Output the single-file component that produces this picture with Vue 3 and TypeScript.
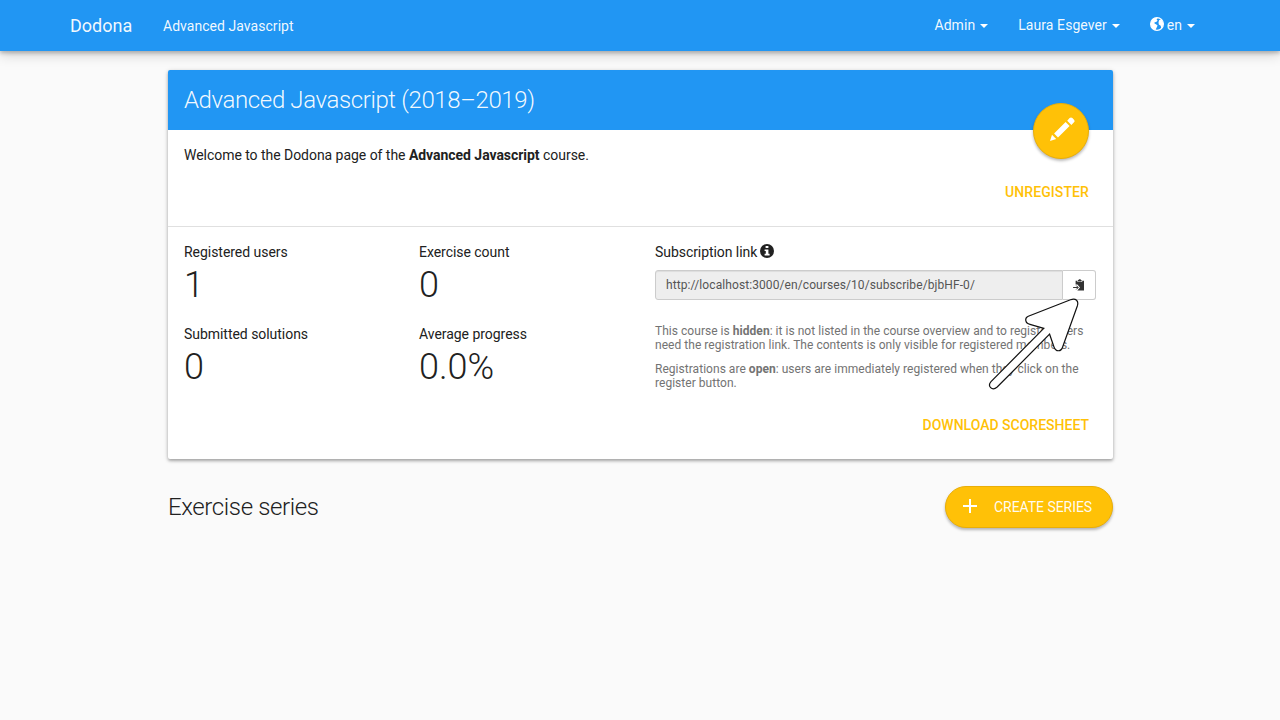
<script setup lang="ts">
interface Stat {
  label: string
  value: string
}

const stats: Stat[] = [
  { label: 'Registered users', value: '1' },
  { label: 'Exercise count', value: '0' },
  { label: 'Submitted solutions', value: '0' },
  { label: 'Average progress', value: '0.0%' },
]

const subscriptionLink = 'http://localhost:3000/en/courses/10/subscribe/bjbHF-0/'
</script>

<template>
  <div class="page">
    <nav class="navbar">
      <a class="brand">Dodona</a>
      <a class="crumb">Advanced Javascript</a>
      <div class="nav-right">
        <a class="nav-item">Admin<span class="caret"></span></a>
        <a class="nav-item">Laura Esgever<span class="caret"></span></a>
        <a class="nav-item lang">
          <svg class="globe" viewBox="0 0 14 14">
            <circle cx="7" cy="7" r="6.4" fill="none" stroke="#fff" stroke-width="1.2" />
            <path d="M1.2 4.5 3 1.8 6.5.6 7.7 1.5 6.5 2.5 7.6 3.6 6.2 5.1 4.6 5.3 4.5 6.6 6 7.3 7.6 8.6 6.9 10 5.4 13.2 2 11.5.6 7z M9.2 3.1 11.5 2.5 13.3 6 12.8 9.3 11.3 11.5 10.7 8.8 8.8 7.6 8.5 5.2z" fill="#fff" />
          </svg>
          en<span class="caret"></span>
        </a>
      </div>
    </nav>

    <main class="container">
      <section class="card">
        <header class="card-title">
          <h2>Advanced Javascript (2018–2019)</h2>
          <button class="fab" aria-label="Edit course">
            <svg viewBox="0 0 24 24" fill="#fff">
              <path d="M0 24 2 17.8 6.2 22z M4.1 16.5 15.6 5.1 19.6 9.1 8 20.5z M17.2 3.7 19.6 1.1Q21 -.2 22.4 1.1L24.2 2.9Q25.3 4 24 5.3L21.4 7.9z" />
            </svg>
          </button>
        </header>
        <div class="welcome">
          <p>Welcome to the Dodona page of the <b>Advanced Javascript</b> course.</p>
          <a class="action">UNREGISTER</a>
        </div>
        <div class="details">
          <div class="stats">
            <div v-for="stat in stats" :key="stat.label" class="stat">
              <div>{{ stat.label }}</div>
              <div class="value">{{ stat.value }}</div>
            </div>
          </div>
          <div class="subscription">
            <div class="label">
              Subscription link
              <svg class="info" viewBox="0 0 14 14">
                <circle cx="7" cy="7" r="7" fill="#212121" />
                <path d="M5.6 2h2.8v2.1H5.6z M4.6 5.4h3.8v4.3h1.2v1.7H4.6V9.7h1.2V7.1H4.6z" fill="#fff" />
              </svg>
            </div>
            <div class="input-group">
              <span class="link">{{ subscriptionLink }}</span>
              <button class="copy" aria-label="Copy link">
                <svg viewBox="0 0 12 12">
                  <path d="M2.6 1.7h1.8V3h4.8V1.7h1.8v9.7H4.3L7 8.5 4.4 5.4H2.6z M4.9 2.4V1h.9V.2h1.9V1h.9v1.4z" fill="#333" />
                  <path d="M.1 8.5h4.8 M3.3 6.6 5.2 8.5 3.3 10.4" fill="none" stroke="#333" stroke-width="1" />
                </svg>
              </button>
            </div>
            <p class="help">This course is <b>hidden</b>: it is not listed in the course overview and to register users need the registration link. The contents is only visible for registered members.</p>
            <p class="help">Registrations are <b>open</b>: users are immediately registered when they click on the register button.</p>
          </div>
        </div>
        <div class="card-actions"><a class="action">DOWNLOAD SCORESHEET</a></div>
      </section>

      <div class="series-header">
        <h2>Exercise series</h2>
        <button class="create">
          <svg viewBox="0 0 14 14"><path d="M7 0v14M0 7h14" stroke="#fff" stroke-width="2" /></svg>
          CREATE SERIES
        </button>
      </div>
    </main>

    <svg class="pointer" viewBox="0 0 96 96">
      <path d="M44.3 22.2 86.5 5.7C92 3.8 94.8 7 93.4 11.7L78.8 52.5C77.2 58.2 71.8 58 70 53L65.6 40.2 13.2 93C7.8 97.5 3.2 91.8 7 87.6L59.8 34.3 46 30.3C40.8 29.4 40.5 23.6 44.3 22.2Z" />
    </svg>
  </div>
</template>

<style>
html,
body {
  margin: 0;
  background: #fafafa;
}
</style>

<style scoped>
* {
  box-sizing: border-box;
}
.page {
  position: relative;
  height: 720px;
  overflow: hidden;
  background: #fafafa;
  color: #212121;
  font: 14px/20px Roboto, sans-serif;
}
button {
  border: 0;
  padding: 0;
  font: inherit;
}
h2 {
  margin: 0;
  font-size: 24px;
  font-weight: 300;
  line-height: 28px;
  letter-spacing: -0.38px;
}
p {
  margin: 0;
}
.navbar {
  display: flex;
  align-items: center;
  height: 51px;
  padding: 0 85px 0 70px;
  background: #2196f3;
  color: rgba(255, 255, 255, 0.95);
  box-shadow: 0 2px 4px rgba(0, 0, 0, 0.24), 0 4px 12px rgba(0, 0, 0, 0.16);
}
.brand {
  width: 93px;
  font-size: 18px;
}
.crumb {
  padding-top: 1px;
  letter-spacing: 0.04px;
}
.nav-right {
  display: flex;
  gap: 30px;
  margin-left: auto;
  padding-bottom: 1px;
}
.nav-item {
  display: flex;
  align-items: center;
}
.nav-item:not(.lang) {
  letter-spacing: 0.07px;
}
.caret {
  margin: 2px 0 0 5px;
  border: 4px solid transparent;
  border-top-color: #fff;
  border-bottom: 0;
}
.globe {
  width: 14px;
  height: 14px;
  margin: 0 3px 2px 0;
}
.container {
  width: 945px;
  margin: 19px auto 0 168px;
}
.card {
  height: 389px;
  border-radius: 2px;
  background: #fff;
  box-shadow: 0 2px 3px rgba(0, 0, 0, 0.25), 0 1px 5px rgba(0, 0, 0, 0.17);
}
.card-title {
  position: relative;
  height: 60px;
  padding: 16px;
  border-radius: 2px 2px 0 0;
  background: #2196f3;
  color: rgba(255, 255, 255, 0.95);
}
.fab {
  position: absolute;
  top: 33px;
  right: 24px;
  width: 56px;
  height: 56px;
  border: 1px solid #e9ae08;
  border-radius: 50%;
  background: #ffc107;
  box-shadow: 0 2px 3px rgba(0, 0, 0, 0.28);
}
.fab svg {
  display: block;
  width: 24px;
  height: 24px;
  margin: 0 0 5px 16px;
  overflow: visible;
}
.welcome {
  height: 97px;
  padding: 15px 24px 0 16px;
  border-bottom: 1px solid #e0e0e0;
}
.welcome p {
  letter-spacing: -0.04px;
}
.action {
  display: block;
  color: #ffc107;
  font-weight: 500;
  text-align: right;
}
.welcome .action {
  margin-top: 17px;
  letter-spacing: 0.1px;
}
.details {
  display: flex;
  height: 183px;
  padding: 15px 17px 0 16px;
}
.stats {
  display: grid;
  grid-template-columns: 235px 236px;
  grid-template-rows: 82px 82px;
  letter-spacing: -0.04px;
}
.value {
  font-size: 36px;
  font-weight: 300;
  line-height: 40px;
  padding-top: 3px;
}
.subscription {
  width: 441px;
}
.label {
  display: flex;
  gap: 3px;
  letter-spacing: -0.06px;
}
.info {
  width: 14px;
  height: 14px;
  margin-top: 2px;
}
.input-group {
  display: flex;
  height: 30px;
  margin: 8px 0 24px;
  font-size: 12px;
}
.link {
  flex: 1;
  padding: 4px 10px;
  border: 1px solid #ccc;
  border-radius: 3px 0 0 3px;
  background: #eee;
  box-shadow: inset 0 1px 1px rgba(0, 0, 0, 0.075);
  color: #555;
  letter-spacing: 0.09px;
}
.copy {
  width: 33px;
  border: 1px solid #ccc;
  border-left: 0;
  border-radius: 0 3px 3px 0;
  background: #fff;
}
.copy svg {
  display: block;
  width: 12px;
  height: 12px;
  margin: 0 0 1px 10px;
}
.help {
  margin-bottom: 10px;
  color: #737373;
  font-size: 12px;
  line-height: 14px;
  letter-spacing: 0.035px;
}
.card-actions {
  padding: 5px 24px 0;
}
.series-header {
  display: flex;
  align-items: center;
  justify-content: space-between;
  margin-top: 27px;
}
.create {
  display: flex;
  align-items: center;
  width: 168px;
  height: 42px;
  padding-left: 17px;
  border: 1px solid #e9ae08;
  border-radius: 21px;
  background: #ffc107;
  color: rgba(255, 255, 255, 0.95);
  letter-spacing: -0.05px;
  box-shadow: 0 2px 3px rgba(0, 0, 0, 0.28);
}
.create svg {
  width: 14px;
  height: 14px;
  margin: 0 17px 2px 0;
}
.pointer {
  position: absolute;
  left: 984px;
  top: 294px;
  width: 96px;
  height: 96px;
  fill: #fff;
  stroke: #111;
  stroke-width: 1.2;
}
</style>
